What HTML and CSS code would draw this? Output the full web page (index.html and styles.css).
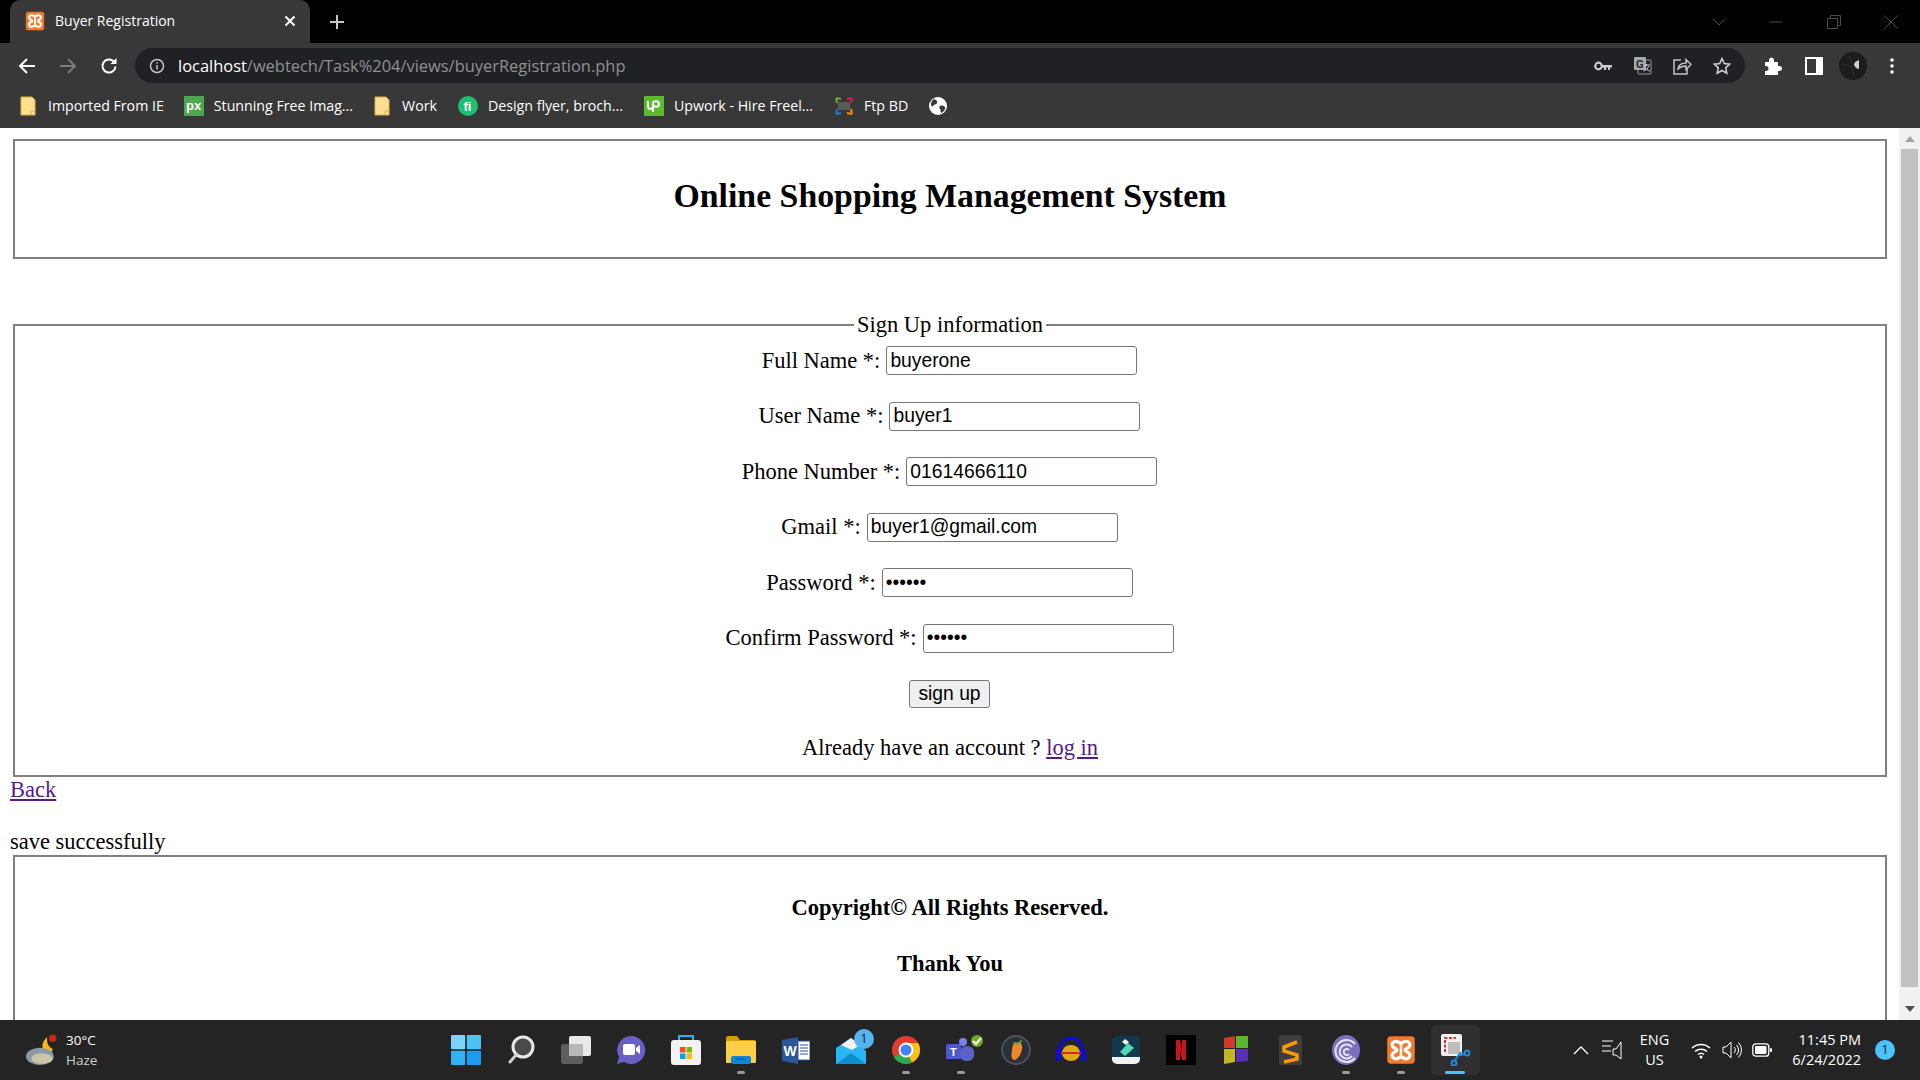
FILE: index.html
```html
<!DOCTYPE html>
<html lang="en">
<head>
    <meta charset="UTF-8">
    <title>Buyer Registration</title>
    <link rel="stylesheet" href="styles.css">
</head>
<body>
    <svg class="defs" width="0" height="0">
        <symbol id="xampp" viewBox="0 0 24 24">
            <rect x="1" y="1" width="22" height="22" rx="3" fill="#ef7b2b"/>
            <path d="M8 5c-2.500 0-3.500 2-3 3.500.4 1.200 1.500 2 3 2.500 1 .3 1 1.700 0 2-1.500.5-2.600 1.300-3 2.500-.5 1.500.5 3.500 3 3.500 1.800 0 2.500-1.200 4-1.500 1.500.3 2.200 1.500 4 1.500 2.500 0 3.500-2 3-3.500-.4-1.200-1.500-2-3-2.500-1-.3-1-1.700 0-2 1.500-.5 2.600-1.300 3-2.500.5-1.500-.5-3.500-3-3.500-1.800 0-2.500 1.200-4 1.500C10.500 6.200 9.800 5 8 5z" fill="none" stroke="#fff" stroke-width="2.600"/>
            <path d="M12 7v10" stroke="#fff" stroke-width="2"/>
        </symbol>
        <symbol id="folder" viewBox="0 0 16 20">
            <path d="M1 1h11l3 3v15H1z" fill="#fcdf8c" stroke="#d9b24c"/>
            <path d="M11 19v-4h4" fill="none" stroke="#d9b24c"/>
        </symbol>
    </svg>

    <div class="chrome">
        <div class="tabstrip">
            <div class="tab">
                <svg class="favicon" width="20" height="20"><use href="#xampp"/></svg>
                <span class="tab-title">Buyer Registration</span>
                <svg class="tab-close" width="12" height="12" viewBox="0 0 12 12"><path d="M1.500 1.500l9 9M10.500 1.500l-9 9" stroke="#fff" stroke-width="2"/></svg>
            </div>
            <svg class="new-tab" width="16" height="16" viewBox="0 0 16 16"><path d="M8 1v14M1 8h14" stroke="#c8c8c8" stroke-width="2"/></svg>
            <div class="window-btns">
                <svg width="14" height="8" viewBox="0 0 14 8"><path d="M1 1l6 6 6-6" fill="none" stroke="#4d4d4d"/></svg>
                <svg width="14" height="2" viewBox="0 0 14 2"><path d="M0 1h13" stroke="#4d4d4d"/></svg>
                <svg width="14" height="14" viewBox="0 0 14 14"><path d="M.5 3.500h10v10H.5zM3.500 3.500v-3h10v10h-3" fill="none" stroke="#4d4d4d"/></svg>
                <svg width="14" height="14" viewBox="0 0 14 14"><path d="M.5.500l13 13M13.500.500l-13 13" stroke="#4d4d4d"/></svg>
            </div>
        </div>

        <div class="toolbar">
            <svg class="nav-btn" width="18" height="18" viewBox="0 0 18 18"><path d="M17 9H2M9 2L2 9l7 7" fill="none" stroke="#fff" stroke-width="2"/></svg>
            <svg class="nav-btn" width="18" height="18" viewBox="0 0 18 18"><path d="M1 9h15M9 2l7 7-7 7" fill="none" stroke="#7b7b7b" stroke-width="2"/></svg>
            <svg class="nav-btn" width="18" height="18" viewBox="0 0 18 18"><path d="M15.500 9.500a6.500 6.500 0 1 1-1.900-5.100" fill="none" stroke="#fff" stroke-width="2"/><path d="M16.500 1v6h-6z" fill="#fff"/></svg>
            <div class="omnibox">
                <svg class="info" width="16" height="16" viewBox="0 0 16 16"><circle cx="8" cy="8" r="6.500" fill="none" stroke="#c4c4c4" stroke-width="1.500"/><path d="M8 7v4.500M8 4.200v1.500" stroke="#c4c4c4" stroke-width="1.500"/></svg>
                <span class="url"><span class="host">localhost</span>/webtech/Task%204/views/buyerRegistration.php</span>
                <div class="omni-icons">
                    <svg width="18" height="10" viewBox="0 0 18 10"><circle cx="4.500" cy="5" r="3.300" fill="none" stroke="#ccc" stroke-width="2.200"/><path d="M8 4h10v2.500h-2V9h-2V6.500h-2V9h-2V6.500H8z" fill="#ccc"/></svg>
                    <svg width="19" height="19" viewBox="0 0 19 19"><rect x="5" y="4" width="13" height="14" rx="1" fill="#202124" stroke="#9a9a9a"/><rect x="1" y="1" width="12" height="13" rx="1" fill="#a8a8a8"/><text x="3" y="11.500" class="gt">G</text><path d="M10 9h7M13.500 8v2M15.500 10c-.5 3-3 4.500-5 5M11.500 10.500c1 2.500 3 4 5.500 4.500" fill="none" stroke="#ccc"/></svg>
                    <svg width="19" height="18" viewBox="0 0 19 18"><path d="M8 3H1v14h13v-5" fill="none" stroke="#c4c4c4" stroke-width="1.500"/><path d="M5 12c.5-4 4-6 8-6V2.500l5 5-5 5V9c-3.500 0-6 1-8 3z" fill="none" stroke="#c4c4c4" stroke-width="1.500"/></svg>
                    <svg width="18" height="18" viewBox="0 0 18 18"><path d="M9 1.500l2.300 5 5.400.6-4 3.700 1.100 5.400L9 13.500l-4.800 2.700 1.100-5.400-4-3.700 5.400-.6z" fill="none" stroke="#ccc" stroke-width="1.600"/></svg>
                </div>
            </div>
            <div class="tool-icons">
                <svg width="18" height="18" viewBox="0 0 18 18"><path d="M1 5h4c-.5-3 1-4.500 2.500-4.500S10.500 2 10 5h4v4c3-.5 4 1 4 2.500S17 14.500 14 14v4H1v-4c2.500.5 3.500-1 3.500-2.500S3.500 8.500 1 9z" fill="#fff"/></svg>
                <svg width="18" height="18" viewBox="0 0 18 18"><rect x="0" y="0" width="18" height="18" fill="#fff"/><rect x="2" y="2" width="9" height="14" fill="#383838"/></svg>
                <svg class="avatar" width="28" height="28" viewBox="0 0 28 28"><circle cx="14" cy="14" r="14" fill="#1c1c1c"/><path d="M3 12l10 3 2 10M10 4l5 11" stroke="#303030" fill="none"/><path d="M16 10l4-2v9l-3-1-2-3z" fill="#cfcfcf"/></svg>
                <svg width="4" height="16" viewBox="0 0 4 16"><circle cx="2" cy="2" r="1.800" fill="#fff"/><circle cx="2" cy="8" r="1.800" fill="#fff"/><circle cx="2" cy="14" r="1.800" fill="#fff"/></svg>
            </div>
        </div>

        <div class="bookmarks">
            <a class="bm"><svg class="bm-folder" width="16" height="20"><use href="#folder"/></svg><span>Imported From IE</span></a>
            <a class="bm"><svg width="20" height="20" viewBox="0 0 20 20"><rect width="20" height="20" fill="#4ea64f"/><text x="2" y="14" class="px">px</text></svg><span>Stunning Free Imag...</span></a>
            <a class="bm"><svg class="bm-folder" width="16" height="20"><use href="#folder"/></svg><span>Work</span></a>
            <a class="bm"><svg width="20" height="20" viewBox="0 0 20 20"><circle cx="10" cy="10" r="10" fill="#1dbf73"/><text x="5.500" y="15" class="px">fi</text></svg><span>Design flyer, broch...</span></a>
            <a class="bm"><svg width="20" height="20" viewBox="0 0 20 20"><rect width="20" height="20" fill="#5bbb2f"/><path d="M4 5v5c0 4 5 4 5 0V7c0-2 6-3 6 1s-5 3-6 1v7" fill="none" stroke="#fff" stroke-width="2"/></svg><span>Upwork - Hire Freel...</span></a>
            <a class="bm"><svg width="20" height="20" viewBox="0 0 20 20"><path d="M2 2l5 1M2 2l1 5" stroke="#6ea63a" stroke-width="2"/><path d="M18 2l-5 1M18 2l-1 5" stroke="#d81b60" stroke-width="2"/><path d="M2 18l5-1M2 18l1-5" stroke="#1e78c8" stroke-width="2"/><path d="M18 18l-5-1M18 18l-1-5" stroke="#ef8a17" stroke-width="2"/><rect x="4" y="6" width="12" height="8" fill="#5a5a5a"/></svg><span>Ftp BD</span></a>
            <svg class="bm-globe" width="18" height="18" viewBox="0 0 18 18"><circle cx="9" cy="9" r="9" fill="#fff"/><path d="M5 2c2 1 4 2 3 4S5 7 4 9 2 8 2 7s1-4 3-5zM11 9c2-1 4 0 5 1s-1 5-4 6c-1-2 0-3-1-4s-1-2 0-3z" fill="#383838"/></svg>
        </div>
    </div>

    <div class="viewport">
        <div class="content">
            <div class="box header-box">
                <h1>Online Shopping Management System</h1>
            </div>

            <fieldset class="signup">
                <legend>Sign Up information</legend>
                <div class="field"><label>Full Name *:</label><input type="text" value="buyerone"></div>
                <div class="field"><label>User Name *:</label><input type="text" value="buyer1"></div>
                <div class="field"><label>Phone Number *:</label><input type="text" value="01614666110"></div>
                <div class="field"><label>Gmail *:</label><input type="text" value="buyer1@gmail.com"></div>
                <div class="field"><label>Password *:</label><input type="password" value="123456"></div>
                <div class="field"><label>Confirm Password *:</label><input type="password" value="123456"></div>
                <div class="field"><button type="button">sign up</button></div>
                <p class="account">Already have an account ? <a href="#">log in</a></p>
            </fieldset>

            <p class="back"><a href="#">Back</a></p>
            <p class="saved">save successfully</p>

            <div class="box footer-box">
                <h3>Copyright© All Rights Reserved.</h3>
                <h3>Thank You</h3>
            </div>
        </div>
        <div class="scrollbar">
            <span class="arrow-up"></span>
            <div class="thumb"></div>
            <span class="arrow-down"></span>
        </div>
    </div>

    <div class="taskbar">
        <div class="weather">
            <svg width="32" height="32" viewBox="0 0 30 30"><circle cx="25" cy="4" r="3.500" fill="#c8281e"/><path d="M20 3c-1 5 1 9 5 11 0 3-3 5-6 4-5-2-5-11 1-15z" fill="#f5b81c"/><ellipse cx="13" cy="21" rx="13" ry="8" fill="#8d99a6"/><ellipse cx="15" cy="23" rx="10" ry="5" fill="#c9c5a8"/></svg>
            <div class="weather-text"><span class="temp">30°C</span><span class="cond">Haze</span></div>
        </div>

        <div class="apps">
            <div class="app"><svg width="30" height="30" viewBox="0 0 30 30"><rect x="0" y="0" width="14.200" height="14.200" rx="1" fill="#7bd3f9"/><rect x="15.800" y="0" width="14.200" height="14.200" rx="1" fill="#4cc2f5"/><rect x="0" y="15.800" width="14.200" height="14.200" rx="1" fill="#34b1f3"/><rect x="15.800" y="15.800" width="14.200" height="14.200" rx="1" fill="#1b9cf0"/></svg></div>
            <div class="app"><svg width="28" height="30" viewBox="0 0 28 30"><circle cx="16" cy="12" r="10" fill="#4a4a4a" stroke="#e8e8e8" stroke-width="3"/><path d="M9 20l-6 7" stroke="#cfcfcf" stroke-width="3" stroke-linecap="round"/></svg></div>
            <div class="app"><svg width="30" height="28" viewBox="0 0 30 28"><rect x="0" y="8" width="22" height="20" rx="2" fill="#5e5e5e"/><rect x="8" y="0" width="22" height="20" rx="2" fill="#e8e8e8"/><rect x="8" y="8" width="14" height="12" fill="#b8b8b8"/></svg></div>
            <div class="app"><svg width="30" height="30" viewBox="0 0 30 30"><path d="M15 1a14 14 0 1 1-7 26l-7 2 2-7A14 14 0 0 1 15 1z" fill="#6a5fc4"/><rect x="7" y="9" width="12" height="11" rx="2" fill="#fff"/><path d="M20 13l4-3v9l-4-3z" fill="#fff"/></svg></div>
            <div class="app"><svg width="30" height="30" viewBox="0 0 30 30"><path d="M8 6V1h14v5" fill="none" stroke="#2cb4e8" stroke-width="2"/><rect x="0" y="5" width="30" height="25" rx="3" fill="#f2f2f2"/><rect x="9" y="12" width="5.500" height="5.500" fill="#f25022"/><rect x="15.500" y="12" width="5.500" height="5.500" fill="#7fba00"/><rect x="9" y="18.500" width="5.500" height="5.500" fill="#00a4ef"/><rect x="15.500" y="18.500" width="5.500" height="5.500" fill="#ffb900"/></svg></div>
            <div class="app running"><svg width="30" height="28" viewBox="0 0 30 28"><path d="M0 2a2 2 0 0 1 2-2h9l3 4h14a2 2 0 0 1 2 2v3H0z" fill="#d39e00"/><rect x="0" y="5" width="30" height="22" rx="1" fill="#fccf45"/><rect x="5" y="20" width="20" height="8" rx="2" fill="#0f86d8"/><path d="M10 23h10" stroke="#0a4e8a"/></svg></div>
            <div class="app"><svg width="28" height="27" viewBox="0 0 28 27"><path d="M0 3l16-3v27L0 24z" fill="#2b579a"/><rect x="16" y="4" width="12" height="19" fill="#fff" stroke="#2b579a"/><path d="M18 8h8M18 11h8M18 14h8M18 17h8" stroke="#2b579a"/><text x="1.500" y="19" class="word">W</text></svg></div>
            <div class="app"><svg width="30" height="30" viewBox="0 0 30 30"><path d="M0 13L15 3l15 13v13H0z" fill="#29b6f6"/><path d="M0 29l15-11 15 11z" fill="#0e8fd0"/><path d="M5 10l10-7 9 7-8 5z" fill="#f2f2f2"/></svg><span class="mail-badge">1</span></div>
            <div class="app running"><svg width="28" height="28" viewBox="0 0 28 28"><circle cx="14" cy="14" r="14" fill="#e33b2e"/><path d="M14 14L1.900 21A14 14 0 0 0 20 26.600z" fill="#2da94f"/><path d="M14 14l6 12.600A14 14 0 0 0 27.900 12 14 14 0 0 0 26 7H14z" fill="#fbc116"/><circle cx="14" cy="14" r="6.500" fill="#4285f4" stroke="#fff" stroke-width="2"/></svg></div>
            <div class="app running"><svg width="30" height="26" viewBox="0 0 30 26"><circle cx="17" cy="5" r="4" fill="#7b83eb"/><rect x="14" y="9" width="14" height="15" rx="6" fill="#5a62c4"/><rect x="0" y="7" width="15" height="15" rx="1.500" fill="#5059c9"/><text x="4" y="18.500" class="teams">T</text></svg><span class="teams-check"><svg width="12" height="12" viewBox="0 0 12 12"><path d="M2 6l3 3 5-6" fill="none" stroke="#fff" stroke-width="2"/></svg></span></div>
            <div class="app"><svg width="30" height="30" viewBox="0 0 30 30"><circle cx="15" cy="15" r="14" fill="#2a3237" stroke="#4a5257" stroke-width="2"/><path d="M14 8c5-1 8 1 7 6-1 6-5 11-8 11-3-1-3-5-2-9 0-4 1-7 3-8z" fill="#f2862b"/><path d="M11 8c3-1 5 0 7-1l3-3-1 5-4 1z" fill="#7da832"/></svg></div>
            <div class="app"><svg width="30" height="28" viewBox="0 0 30 28"><path d="M4 18v-5a11 11 0 0 1 22 0v5" fill="none" stroke="#0b0bdc" stroke-width="3"/><rect x="0" y="13" width="5" height="12" rx="2.500" fill="#0b0bdc"/><rect x="25" y="13" width="5" height="12" rx="2.500" fill="#0b0bdc"/><ellipse cx="15" cy="17" rx="9" ry="8" fill="#e0a81e"/><path d="M5 17h20" stroke="#d82a1a" stroke-width="2"/></svg></div>
            <div class="app"><svg width="28" height="28" viewBox="0 0 28 28"><rect width="28" height="28" rx="5" fill="#14384b"/><path d="M0 21h28v2a5 5 0 0 1-5 5H5a5 5 0 0 1-5-5z" fill="#f2f2f2"/><path d="M16 7l6 5-9 8-5-4z" fill="#4dd9b8"/><path d="M13 3l4 3-3 3-4-3z" fill="#f2f2f2"/></svg></div>
            <div class="app"><svg width="30" height="30" viewBox="0 0 30 30"><rect width="30" height="30" fill="#000"/><path d="M10 5h4l2 10V5h4v20h-4l-2-10v10h-4z" fill="#c4161c"/></svg></div>
            <div class="app"><svg width="24" height="28" viewBox="0 0 24 28"><path d="M0 2l11-2v12H0z" fill="#d13a2a"/><path d="M12 0h12v12H12z" fill="#5cb531"/><path d="M0 13h11v13L0 28z" fill="#c4b820"/><path d="M12 13h12v12l-12 1z" fill="#5a2fb5"/></svg></div>
            <div class="app"><svg width="23" height="30" viewBox="0 0 23 30"><rect width="23" height="30" rx="2" fill="#3d3d3d"/><path d="M18 7L5 12v4l13 4v4L5 27" fill="none" stroke="#ff9800" stroke-width="3.500"/></svg></div>
            <div class="app running"><svg width="30" height="30" viewBox="0 0 30 30"><ellipse cx="15" cy="15" rx="14" ry="15" fill="#7c6ec0"/><path d="M24 9a11 11 0 1 0 0 14M21 12a7 7 0 1 0 0 9M18 15a3 3 0 1 0 0 4" fill="none" stroke="#e8e4f8" stroke-width="2"/></svg></div>
            <div class="app running"><svg width="30" height="30"><use href="#xampp"/></svg></div>
            <div class="app active"><svg width="30" height="32" viewBox="0 0 30 32"><rect x="0" y="0" width="21" height="22" rx="2" fill="#f0f0f0"/><path d="M4 18V4h11" fill="none" stroke="#d13a2a" stroke-width="2" stroke-dasharray="3 1.500"/><rect x="7" y="8" width="12" height="12" fill="#bdbdbd"/><path d="M20 18l-6 8" stroke="#1e88e5" stroke-width="2"/><circle cx="13" cy="29" r="2.500" fill="none" stroke="#1e88e5" stroke-width="2"/><circle cx="26" cy="19" r="2.500" fill="none" stroke="#1e88e5" stroke-width="2"/><path d="M24 20l-6 1" stroke="#1e88e5" stroke-width="2"/></svg></div>
        </div>

        <div class="tray">
            <svg class="tray-chevron" width="16" height="9" viewBox="0 0 16 9"><path d="M1 8l7-7 7 7" fill="none" stroke="#fff" stroke-width="1.300"/></svg>
            <svg class="tray-notif" width="20" height="20" viewBox="0 0 20 20"><path d="M0 1h11M0 6h9M0 11h9" stroke="#fff"/><path d="M19 2v17l-5-4h-3V9h3z" fill="none" stroke="#fff"/></svg>
            <div class="lang"><span>ENG</span><span>US</span></div>
            <svg class="tray-wifi" width="20" height="17" viewBox="0 0 20 17"><path d="M1 6a13 13 0 0 1 18 0M4 9.500a9 9 0 0 1 12 0M7 12.500a4.500 4.500 0 0 1 6 0" fill="none" stroke="#fff" stroke-width="1.500"/><circle cx="10" cy="15" r="1.500" fill="#fff"/></svg>
            <svg class="tray-vol" width="20" height="20" viewBox="0 0 20 20"><path d="M1 7h3l5-5v16l-5-5H1z" fill="none" stroke="#fff"/><path d="M12 7a4 4 0 0 1 0 6M14.500 5a7 7 0 0 1 0 10M16.500 2.500a11 11 0 0 1 0 15" fill="none" stroke="#fff"/></svg>
            <svg class="tray-batt" width="20" height="14" viewBox="0 0 20 14"><rect x=".8" y=".8" width="16" height="12.400" rx="3" fill="none" stroke="#fff" stroke-width="1.300"/><rect x="3" y="3" width="11.500" height="8" rx="1" fill="#fff"/><rect x="18" y="5" width="2" height="4" rx="1" fill="#fff"/></svg>
            <div class="clock"><span>11:45 PM</span><span>6/24/2022</span></div>
            <span class="notif-badge">1</span>
        </div>
    </div>
</body>
</html>
```

FILE: styles.css
```css
* { box-sizing: border-box; }
html, body { height: 100%; }
body { margin: 0; width: 1920px; height: 1080px; overflow: hidden; display: flex; flex-direction: column; background: #fff; color: #000; font-family: "Liberation Serif", serif; font-size: 22.5px; }
.defs { position: absolute; }

/* browser chrome */
.chrome { font-family: "Open Sans", sans-serif; color: #fff; }
.tabstrip { height: 43px; background: #000; display: flex; align-items: center; }
.tab { width: 300px; height: 43px; margin-left: 10px; padding: 0 14px 2px 15px; background: #383838; border-radius: 10px 10px 0 0; display: flex; align-items: center; gap: 10px; }
.tab-title { flex: 1; font-size: 14px; white-space: nowrap; }
.new-tab { margin-left: 19px; }
.window-btns { margin-left: auto; width: 208px; padding-right: 22px; display: flex; justify-content: space-between; align-items: center; }
.toolbar { height: 42px; background: #383838; display: flex; align-items: center; padding-top: 3px; }
.nav-btn { margin-left: 23px; flex: none; }
.nav-btn:first-child { margin-left: 18px; }
.omnibox { flex: none; width: 1610px; height: 35px; margin-left: 17px; background: #202124; border-radius: 18px; display: flex; align-items: center; padding-left: 14px; }
.info { flex: none; }
.url { margin-left: 13px; font-size: 16.450px; color: #8f9193; white-space: nowrap; }
.host { color: #fff; }
.omni-icons { margin-left: auto; width: 151px; padding-right: 14px; display: flex; justify-content: space-between; align-items: center; }
.gt { font: bold 10px "Liberation Sans", sans-serif; fill: #202124; }
.tool-icons { flex: 1; padding: 0 26px 0 19px; display: flex; justify-content: space-between; align-items: center; }
.avatar { margin-left: -6px; }
.bookmarks { height: 43px; background: #383838; display: flex; align-items: center; padding: 0 0 2px 19px; font-size: 14.200px; }
.bm { display: flex; align-items: center; gap: 10px; margin-right: 21px; white-space: nowrap; color: #fff; }
.bm:first-child { margin-left: 1px; margin-right: 20px; }
.bm-folder { margin-right: 2px; }
.px { font: bold 13px "Liberation Sans", sans-serif; fill: #fff; }

/* page */
.viewport { height: 892px; display: flex; overflow: hidden; }
.content { flex: 1; min-width: 0; padding: 11px 12px 0 10px; }
.box { margin-left: 3px; border: 2px solid #808080; }
.header-box { height: 120px; padding-top: 35px; text-align: center; }
h1 { margin: 0; font-size: 33.800px; line-height: 40px; }
.signup { margin: 53px 0 0 3px; padding: 0; border: 2px solid #808080; height: 464.500px; text-align: center; }
legend { margin: 0 auto; padding: 0 3px; line-height: 26px; }
.field { height: 29px; margin-bottom: 26.500px; padding-right: 1px; display: flex; justify-content: center; align-items: center; gap: 6px; }
.signup legend + .field { margin-top: 8px; }
label { white-space: nowrap; }
input { width: 251px; height: 29px; padding: 1px 3px; border: 1px solid #767676; border-radius: 3px; font-family: "Liberation Sans", sans-serif; font-size: 19.300px; }
button { width: 81px; height: 28px; padding: 0; background: #efefef; border: 1px solid #767676; border-radius: 3px; font-family: "Liberation Sans", sans-serif; font-size: 19.300px; }
.account { margin: 0; line-height: 26px; }
a { color: #551a8b; }
.back { margin: 0; line-height: 26px; }
.saved { margin: 26px 0 0; line-height: 26px; }
.footer-box { height: 300px; text-align: center; padding-top: 38px; }
h3 { margin: 0 0 30px; font-size: 22.500px; line-height: 26px; }
.scrollbar { width: 21px; background: #f1f1f1; position: relative; }
.thumb { position: absolute; left: 2px; right: 2px; top: 21px; bottom: 33px; background: #c1c1c1; }
.arrow-up { position: absolute; top: 8px; left: 6px; border: 5px solid transparent; border-top: 0; border-bottom: 6px solid #a3a3a3; }
.arrow-down { position: absolute; bottom: 8px; left: 6px; border: 5px solid transparent; border-bottom: 0; border-top: 6px solid #505050; }

/* taskbar */
.taskbar { height: 60px; background: #242424; display: grid; grid-template-columns: 1fr auto 1fr; align-items: center; color: #fff; font-family: "Open Sans", sans-serif; font-size: 13.500px; }
.weather { display: flex; align-items: center; gap: 8px; padding-left: 26px; }
.weather-text, .lang, .clock { display: flex; flex-direction: column; line-height: 20px; }
.cond { color: #d0d0d0; }
.apps { display: flex; padding-left: 1px; }
.app { width: 55px; height: 60px; display: flex; align-items: center; justify-content: center; position: relative; }
.app.running::after, .app.active::after { content: ""; position: absolute; bottom: 6px; left: 24px; width: 8px; height: 3px; border-radius: 2px; background: #9a9a9a; }
.app.active { background: #2f2f2f; border-radius: 5px; height: 50px; margin: 5px 3px; width: 49px; }
.app.active::after { bottom: 1px; left: 14px; width: 20px; background: #4cc2ff; }
.mail-badge { position: absolute; top: 9px; right: 4px; width: 20px; height: 20px; border-radius: 50%; background: #56b4ef; color: #10202c; font-size: 12px; text-align: center; line-height: 20px; }
.teams-check { position: absolute; top: 15px; right: 5px; width: 12px; height: 12px; border-radius: 50%; background: #6ea82c; display: flex; }
.tray { display: flex; align-items: center; justify-content: flex-end; }
.tray-chevron { margin-right: 13px; }
.tray-notif { margin-right: 18px; }
.lang { align-items: center; margin-right: 22px; font-size: 14.500px; }
.tray-wifi { margin-right: 11px; }
.tray-vol { margin-right: 10px; }
.tray-batt { margin-right: 20px; }
.clock { align-items: flex-end; margin-right: 14px; font-size: 14.500px; }
.notif-badge { width: 20px; height: 20px; margin-right: 25px; border-radius: 50%; background: #4cc2ff; color: #10202c; text-align: center; line-height: 20px; font-size: 12px; }
.word { font: bold 14px "Liberation Sans", sans-serif; fill: #fff; }
.teams { font: bold 11px "Liberation Sans", sans-serif; fill: #fff; }
```
